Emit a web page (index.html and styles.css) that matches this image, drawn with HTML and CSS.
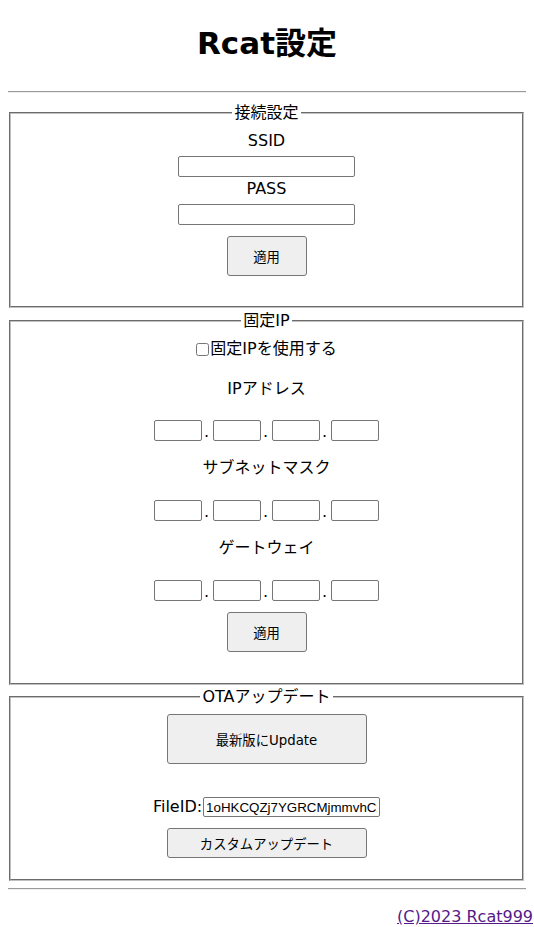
FILE: index.html
```html
<!DOCTYPE html>
<html lang="ja">
<head>
  <meta charset="UTF-8">
  <meta name="viewport" content="width=device-width, initial-scale=1.0">
  <title>Rcat設定</title>
  <link rel="stylesheet" href="styles.css">
</head>
<body>
  <h1 class="title">Rcat設定</h1>
  <hr class="rule">

  <fieldset class="panel panel-wifi">
    <legend>接続設定</legend>
    <div class="label">SSID</div>
    <input class="text-input" type="text" name="ssid">
    <div class="label">PASS</div>
    <input class="text-input" type="password" name="pass">
    <button class="btn btn-apply" type="button">適用</button>
  </fieldset>

  <fieldset class="panel panel-ip">
    <legend>固定IP</legend>
    <label class="check-row"><input type="checkbox" name="static">固定IPを使用する</label>

    <div class="label ip-label">IPアドレス</div>
    <div class="ip-row">
      <input class="ip-input" type="text"><span class="dot">.</span><input class="ip-input" type="text"><span class="dot">.</span><input class="ip-input" type="text"><span class="dot">.</span><input class="ip-input" type="text">
    </div>

    <div class="label ip-label">サブネットマスク</div>
    <div class="ip-row">
      <input class="ip-input" type="text"><span class="dot">.</span><input class="ip-input" type="text"><span class="dot">.</span><input class="ip-input" type="text"><span class="dot">.</span><input class="ip-input" type="text">
    </div>

    <div class="label ip-label">ゲートウェイ</div>
    <div class="ip-row">
      <input class="ip-input" type="text"><span class="dot">.</span><input class="ip-input" type="text"><span class="dot">.</span><input class="ip-input" type="text"><span class="dot">.</span><input class="ip-input" type="text">
    </div>

    <button class="btn btn-apply btn-apply-ip" type="button">適用</button>
  </fieldset>

  <fieldset class="panel panel-ota">
    <legend>OTAアップデート</legend>
    <button class="btn btn-latest" type="button">最新版にUpdate</button>
    <div class="file-row">
      <span>FileID:</span><input class="file-input" type="text" value="1oHKCQZj7YGRCMjmmvhCxW2pLq9">
    </div>
    <button class="btn btn-custom" type="button">カスタムアップデート</button>
  </fieldset>

  <hr class="rule rule-bottom">

  <div class="footer">
    <a href="#" class="credit">(C)2023 Rcat999</a>
  </div>
</body>
</html>
```

FILE: styles.css
```css
body {
  margin: 0 0 0 8px;
  font-family: "DejaVu Sans", "Noto Sans CJK JP", sans-serif;
  font-size: 16px;
  line-height: 24px;
  color: #000;
  background: #fff;
}

.title {
  margin: 23px 8px 0 0;
  font-size: 31px;
  line-height: 40px;
  font-weight: bold;
  text-align: center;
}

.rule {
  margin: 28px 8px 0 0;
  height: 0;
  border: 0;
  border-top: 1px solid #9a9a9a;
  border-bottom: 1px solid #eeeeee;
}

.rule-bottom {
  margin-top: 7px;
}

.panel {
  margin: 8px 10px 0 1px;
  padding: 4px 12px 30px;
  border: 2px groove #c0c0c0;
  text-align: center;
}

.panel legend {
  margin: 0 auto;
  padding: 0 2px;
  line-height: 24px;
}

.panel-ip {
  margin-top: 1px;
  padding-bottom: 31px;
}

.panel-ota {
  margin-top: 0;
  padding-bottom: 21px;
}

.label {
  display: block;
}

.text-input {
  display: block;
  box-sizing: border-box;
  width: 177px;
  height: 21px;
  margin: 3px auto 0;
  padding: 1px 2px;
  border: 1px solid #767676;
  border-radius: 2px;
  font-family: "Liberation Sans", Arial, sans-serif;
  font-size: 13.33px;
}

.btn {
  display: block;
  box-sizing: border-box;
  margin: 0 auto;
  background: #efefef;
  border: 1px solid #767676;
  border-radius: 3px;
  font-family: "DejaVu Sans", "Noto Sans CJK JP", sans-serif;
  font-size: 13.33px;
  color: #000;
  cursor: pointer;
}

.btn-apply {
  width: 80px;
  height: 40px;
  margin-top: 11px;
}

.check-row {
  display: flex;
  justify-content: center;
  align-items: center;
}

.check-row input {
  width: 13px;
  height: 13px;
  margin: 0 1px 0 0;
}

.ip-label {
  margin-top: 16px;
}

.ip-label ~ .ip-label {
  margin-top: 15px;
}

.ip-row {
  display: flex;
  justify-content: center;
  align-items: flex-end;
  margin-top: 19px;
}

.ip-label ~ .ip-row ~ .ip-row {
  margin-top: 20px;
}

.ip-input {
  box-sizing: border-box;
  width: 48px;
  height: 21px;
  margin: 0;
  padding: 1px 2px;
  border: 1px solid #767676;
  border-radius: 2px;
  font-family: "Liberation Sans", Arial, sans-serif;
  font-size: 13.33px;
}

.dot {
  width: 11px;
  padding-left: 2px;
  box-sizing: border-box;
  text-align: left;
  font-size: 16px;
  line-height: 19px;
}

.btn-apply-ip {
  margin-top: 11px;
}

.btn-latest {
  width: 200px;
  height: 50px;
  margin-top: 1px;
}

.file-row {
  display: flex;
  justify-content: center;
  align-items: center;
  margin-top: 31px;
}

.file-input {
  box-sizing: border-box;
  width: 177px;
  height: 20px;
  margin: 0 0 0 1px;
  padding: 1px 2px;
  border: 1px solid #767676;
  border-radius: 2px;
  font-family: "Liberation Sans", Arial, sans-serif;
  font-size: 13.33px;
  color: #000;
}

.btn-custom {
  width: 200px;
  height: 30px;
  margin-top: 9px;
}

.footer {
  margin: 17px 1px 0 0;
  line-height: 20px;
  text-align: right;
}

.credit {
  color: #551a8b;
  text-decoration: underline;
}
```
